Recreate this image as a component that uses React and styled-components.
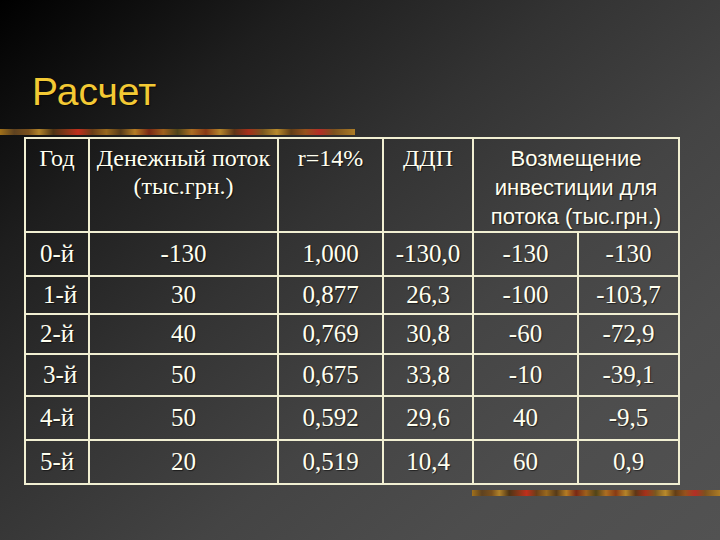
import React from "react";
import styled, { createGlobalStyle } from "styled-components";

const GlobalStyle = createGlobalStyle`
  html, body {
    margin: 0;
    padding: 0;
    background: #000;
  }
`;

const Slide = styled.div`
  width: 720px;
  height: 540px;
  overflow: hidden;
  display: flex;
  flex-direction: column;
  background: linear-gradient(
    140deg,
    #000 0%,
    #1e1e1e 22%,
    #333 42%,
    #444 62%,
    #4d4d4d 80%,
    #525252 100%
  );
`;

const Title = styled.h1`
  margin: 70px 0 0 32px;
  font-family: "Liberation Sans", Arial, sans-serif;
  font-weight: normal;
  font-size: 39px;
  line-height: 44px;
  color: #f3c934;
  text-shadow: 1px 1px 1px rgba(0, 0, 0, 0.6);
`;

const Stripe = styled.div`
  height: 6px;
  width: ${(p) => p.$width}px;
  margin-top: ${(p) => p.$top}px;
  margin-left: ${(p) => p.$left || 0}px;
  background: linear-gradient(
    90deg,
    #a0701a 0%,
    #5e4220 4%,
    #7a501c 8%,
    #b0822a 11%,
    #4e3414 15%,
    #8a3618 19%,
    #c02e1c 22%,
    #6a3e18 26%,
    #98681e 30%,
    #563a18 34%,
    #b47c24 38%,
    #7a2814 42%,
    #9e601c 46%,
    #504418 50%,
    #ac6e22 54%,
    #883a14 58%,
    #b4842a 62%,
    #5e3616 66%,
    #a6301a 70%,
    #7a5820 74%,
    #b88a2c 78%,
    #623e16 82%,
    #96521c 86%,
    #b42e26 90%,
    #7c521e 94%,
    #ac7c26 100%
  );
`;

const Table = styled.table`
  margin: 2px 0 0 24px;
  width: 654px;
  table-layout: fixed;
  border-collapse: collapse;
  border: 2px solid #f1efd2;
  color: #fffff0;
  font-family: "Liberation Serif", "Times New Roman", serif;
  text-shadow: 1px 1px 1px rgba(0, 0, 0, 0.55);
`;

const Row = styled.tr`
  height: ${(p) => p.$h}px;
`;

const HeadCell = styled.th`
  border: 2px solid #f1efd2;
  padding: 5px 0 0;
  vertical-align: top;
  text-align: center;
  font-weight: normal;
  font-size: ${(p) => (p.$sans ? 22 : 24)}px;
  line-height: ${(p) => (p.$sans ? 29 : 28)}px;
  font-family: ${(p) =>
    p.$sans
      ? '"Liberation Sans", Arial, sans-serif'
      : '"Liberation Serif", "Times New Roman", serif'};
`;

const Cell = styled.td`
  border: 2px solid #f1efd2;
  padding: 0;
  vertical-align: middle;
  text-align: center;
  font-size: 25px;
  line-height: 28px;
`;

const rows = [
  { h: 44, v: ["0-й", "-130", "1,000", "-130,0", "-130", "-130"] },
  { h: 38, v: ["\u00a01-й", "30", "0,877", "26,3", "-100", "-103,7"] },
  { h: 40, v: ["2-й", "40", "0,769", "30,8", "-60", "-72,9"] },
  { h: 42, v: ["\u00a03-й", "50", "0,675", "33,8", "-10", "-39,1"] },
  { h: 44, v: ["4-й", "50", "0,592", "29,6", "40", "-9,5"] },
  { h: 44, v: ["5-й", "20", "0,519", "10,4", "60", "0,9"] },
];

const widths = [64, 189, 105, 90, 105, 101];

const App = () => {
  return (
    <>
      <GlobalStyle />
      <Slide>
        <Title>Расчет</Title>
        <Stripe $width={355} $top={15} />
        <Table>
          <colgroup>
            {widths.map((w, i) => (
              <col key={i} style={{ width: w }} />
            ))}
          </colgroup>
          <thead>
            <Row $h={94}>
              <HeadCell>Год</HeadCell>
              <HeadCell>
                Денежный поток
                <br />
                (тыс.грн.)
              </HeadCell>
              <HeadCell>r=14%</HeadCell>
              <HeadCell>ДДП</HeadCell>
              <HeadCell colSpan={2} $sans>
                Возмещение
                <br />
                инвестиции для
                <br />
                потока (тыс.грн.)
              </HeadCell>
            </Row>
          </thead>
          <tbody>
            {rows.map((r, i) => (
              <Row key={i} $h={r.h}>
                {r.v.map((v, j) => (
                  <Cell key={j}>{v}</Cell>
                ))}
              </Row>
            ))}
          </tbody>
        </Table>
        <Stripe $width={248} $top={5} $left={472} />
      </Slide>
    </>
  );
};

export default App;
